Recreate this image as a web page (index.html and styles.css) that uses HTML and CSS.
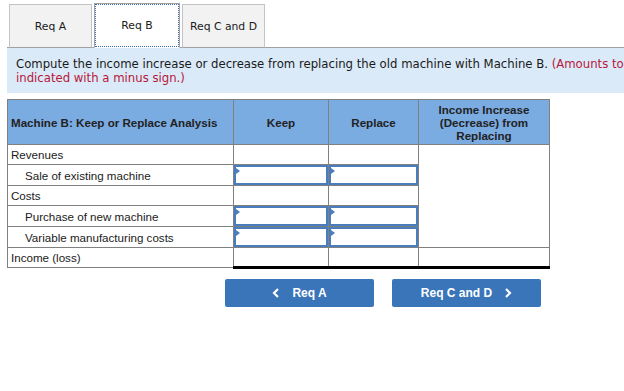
FILE: index.html
```html
<!DOCTYPE html>
<html>
<head>
<meta charset="utf-8">
<link rel="stylesheet" href="styles.css">
</head>
<body>
<div class="page">
  <div class="tabs">
    <div class="tab">Req A</div>
    <div class="tab active">Req B</div>
    <div class="tab">Req C and D</div>
  </div>
  <div class="instr">
    <div class="line">Compute the income increase or decrease from replacing the old machine with Machine B. <span class="red">(Amounts to be deducted should be</span></div>
    <div class="line red">indicated with a minus sign.)</div>
  </div>
  <table class="grid">
    <colgroup>
      <col class="c1"><col class="c2"><col class="c3"><col class="c4">
    </colgroup>
    <thead>
      <tr>
        <th class="left">Machine B: Keep or Replace Analysis</th>
        <th>Keep</th>
        <th>Replace</th>
        <th>Income Increase (Decrease) from Replacing</th>
      </tr>
    </thead>
    <tbody>
      <tr><td class="lbl">Revenues</td><td></td><td></td><td class="merged" rowspan="5"></td></tr>
      <tr><td class="lbl sub">Sale of existing machine</td><td class="inp"><div class="box"></div></td><td class="inp"><div class="box"></div></td></tr>
      <tr><td class="lbl">Costs</td><td></td><td></td></tr>
      <tr><td class="lbl sub">Purchase of new machine</td><td class="inp"><div class="box"></div></td><td class="inp"><div class="box"></div></td></tr>
      <tr><td class="lbl sub">Variable manufacturing costs</td><td class="inp"><div class="box"></div></td><td class="inp"><div class="box"></div></td></tr>
      <tr class="total"><td class="lbl">Income (loss)</td><td class="tot"></td><td class="tot"></td><td class="tot"></td></tr>
    </tbody>
  </table>
  <div class="nav">
    <button class="btn"><svg width="8" height="10" viewBox="0 0 8 10"><path d="M6 1 L2 5 L6 9" fill="none" stroke="#fff" stroke-width="2.2"/></svg><span>Req A</span></button>
    <button class="btn"><span>Req C and D</span><svg width="8" height="10" viewBox="0 0 8 10"><path d="M2 1 L6 5 L2 9" fill="none" stroke="#fff" stroke-width="2.2"/></svg></button>
  </div>
</div>
</body>
</html>
```
FILE: styles.css
```css
html, body {
  margin: 0;
  padding: 0;
  background: #fff;
  overflow: hidden;
}
.page {
  width: 624px;
  overflow: hidden;
}
.tabs {
  display: flex;
  gap: 2px;
  margin-left: 7px;
  padding-left: 2px;
  padding-top: 4px;
  border-bottom: 1px solid #a0a0a0;
  width: 800px;
}
.tab {
  box-sizing: border-box;
  height: 44px;
  width: 83px;
  margin-bottom: -1px;
  background: #f2f2f2;
  border: 1px solid #c4c4c4;
  border-bottom: 1px solid #a0a0a0;
  display: flex;
  align-items: center;
  justify-content: center;
  font-family: "DejaVu Sans", Verdana, sans-serif;
  font-size: 10.8px;
  color: #1a1a1a;
}
.tab.active {
  width: 86px;
  background: #fff;
  border: 1px solid #a0a0a0;
  border-bottom: 1px solid #fff;
  outline: 1px dotted #3a6fb0;
  outline-offset: -2px;
  margin-top: -1px;
  height: 45px;
}
.instr {
  margin-left: 7px;
  width: 640px;
  box-sizing: border-box;
  background: #dbeaf8;
  padding: 9px 0 8px 9px;
  font-family: "DejaVu Sans", Verdana, sans-serif;
  font-size: 11.7px;
  line-height: 14px;
  color: #1a1a1a;
  height: 45px;
  overflow: hidden;
}
.instr .line {
  white-space: nowrap;
}
.instr .red {
  color: #b8173a;
}
.grid {
  margin: 6px 0 0 7px;
  border-collapse: collapse;
  width: 542px;
  table-layout: fixed;
  font-family: "Liberation Sans", Arial, sans-serif;
  font-size: 11.6px;
  color: #1a1a1a;
}
.c1 { width: 226px; }
.c2 { width: 95px; }
.c3 { width: 90px; }
.c4 { width: 131px; }
.grid th {
  background: #7aabe1;
  border: 1px solid #808080;
  height: 44px;
  padding: 0 4px;
  font-weight: bold;
  color: #222;
  line-height: 13px;
  text-align: center;
}
.grid th.left {
  text-align: left;
  padding-left: 3px;
}
.grid td {
  border: 1px solid #808080;
  height: 20px;
  padding: 0;
  box-sizing: border-box;
}
.grid td.lbl {
  padding-left: 3px;
}
.grid td.sub {
  padding-left: 17px;
}
.grid td.inp {
  padding: 0;
}
.box {
  box-sizing: border-box;
  height: 20px;
  border: 2px solid #4a7dbd;
  position: relative;
}
.box::before {
  content: "";
  position: absolute;
  left: 0;
  top: 1px;
  border-left: 4px solid #4a7dbd;
  border-top: 3px solid transparent;
  border-bottom: 3px solid transparent;
}
.grid td.merged {
  border-bottom: 1px solid #808080;
}
.grid td.tot {
  border-bottom: 3px solid #000;
}
.nav {
  display: flex;
  gap: 18px;
  margin: 10px 0 0 225px;
}
.btn {
  width: 149px;
  height: 28px;
  border: none;
  border-radius: 2px;
  background: #3a75ba;
  color: #fff;
  font-family: "Liberation Sans", Arial, sans-serif;
  font-size: 12px;
  font-weight: bold;
  display: flex;
  align-items: center;
  justify-content: center;
  gap: 12px;
  padding: 0;
}
```
